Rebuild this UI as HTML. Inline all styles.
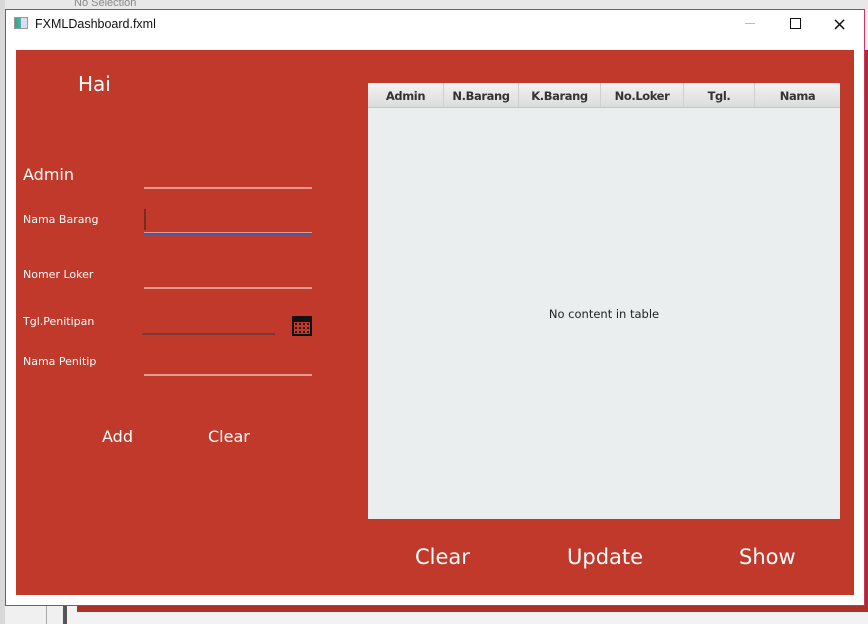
<!DOCTYPE html>
<html><head><meta charset="utf-8"><style>
*{margin:0;padding:0;box-sizing:border-box}
body{width:868px;height:624px;overflow:hidden;background:#f0f0f0;font-family:"Liberation Sans",sans-serif;position:relative}
.abs{position:absolute}
.t{color:#fff;font-family:"DejaVu Sans","Liberation Sans",sans-serif}
.line{position:absolute;height:2px;background:#e59a90}
.hd{position:absolute;top:0;height:24px;border-right:1px solid #cfcfcf;font:bold 11.5px "DejaVu Sans",sans-serif;color:#333;text-align:center;line-height:26px;letter-spacing:-0.4px}
</style></head><body>
<div class="abs" style="left:0;top:0;width:868px;height:12px;background:#e8e8e8"></div>
<div class="abs" style="left:74px;top:-3px;font:11px 'Liberation Sans';color:#888">No Selection</div>
<div class="abs" style="left:0;top:0;width:5px;height:624px;background:#d8d8d8"></div>
<div class="abs" style="left:46px;top:606px;width:1px;height:18px;background:#aaa"></div>
<div class="abs" style="left:63px;top:606px;width:805px;height:18px;background:#555"></div>
<div class="abs" style="left:67px;top:606px;width:801px;height:18px;background:#f2f2f2"></div>
<div class="abs" style="left:77px;top:606px;width:791px;height:6px;background:#a93226"></div>
<div class="abs" style="left:864px;top:50px;width:4px;height:560px;background:#a93226"></div>
<div class="abs" style="left:5px;top:9px;width:860px;height:597px;background:#fff;border:1px solid #d0306a"></div>
<div class="abs" style="left:14px;top:17px;width:14px;height:12px;border:1px solid #999;background:linear-gradient(90deg,#3a7 0,#5ab 50%,#dde 50%)"></div>
<div class="abs" style="left:35px;top:17px;font:12.5px 'Liberation Sans';color:#111">FXMLDashboard.fxml</div>
<div class="abs" style="left:745px;top:23px;width:10px;height:1px;background:#bbb"></div>
<div class="abs" style="left:790px;top:18px;width:11px;height:11px;border:1px solid #111"></div>
<div class="abs" style="left:832px;top:14px;font:18px 'DejaVu Sans';color:#111">×</div>
<div class="abs" style="left:16px;top:50px;width:838px;height:545px;background:#c0392b"></div>
<div class="abs t" style="left:78px;top:72px;font-size:20px">Hai</div>
<div class="abs t" style="left:23px;top:165px;font-size:16px">Admin</div>
<div class="line" style="left:144px;top:187px;width:168px"></div>
<div class="abs t" style="left:23px;top:213px;font-size:11px">Nama Barang</div>
<div class="abs" style="left:144px;top:209px;width:2px;height:21px;background:#7a2a22"></div>
<div class="line" style="left:144px;top:232px;width:168px;height:1px"></div>
<div class="abs" style="left:144px;top:233px;width:168px;height:2px;background:#4a56a8"></div>
<div class="abs t" style="left:23px;top:268px;font-size:11px">Nomer Loker</div>
<div class="line" style="left:144px;top:287px;width:168px"></div>
<div class="abs t" style="left:23px;top:315px;font-size:11px">Tgl.Penitipan</div>
<div class="abs" style="left:142px;top:333px;width:133px;height:2px;background:#7a3a33"></div>
<div class="abs" style="left:292px;top:316px;width:20px;height:20px;background:#111;border-top:3px solid #111">
<div style="position:absolute;left:2px;top:3px;width:16px;height:12px;background:#c0392b;background-image:radial-gradient(#111 1px,transparent 1.2px);background-size:4px 4px"></div></div>
<div class="abs t" style="left:23px;top:355px;font-size:11px">Nama Penitip</div>
<div class="line" style="left:144px;top:374px;width:168px"></div>
<div class="abs t" style="left:102px;top:427px;font-size:16px">Add</div>
<div class="abs t" style="left:208px;top:427px;font-size:16px">Clear</div>
<div class="abs" style="left:368px;top:83px;width:472px;height:436px;background:#eaeeef">
<div class="abs" style="left:0;top:0;width:472px;height:25px;background:linear-gradient(#f2f2f2,#dcdcdc);border-bottom:1px solid #c8c8c8"></div>
<div class="hd" style="left:0;width:76px">Admin</div>
<div class="hd" style="left:76px;width:75px">N.Barang</div>
<div class="hd" style="left:151px;width:82px">K.Barang</div>
<div class="hd" style="left:233px;width:83px">No.Loker</div>
<div class="hd" style="left:316px;width:71px">Tgl.</div>
<div class="hd" style="left:387px;width:85px;border:none">Nama</div>
<div class="abs" style="left:0;top:224px;width:472px;text-align:center;font:11.5px 'DejaVu Sans';color:#222">No content in table</div>
</div>
<div class="abs t" style="left:415px;top:545px;font-size:21px">Clear</div>
<div class="abs t" style="left:567px;top:545px;font-size:21px">Update</div>
<div class="abs t" style="left:739px;top:545px;font-size:21px">Show</div>
</body></html>
